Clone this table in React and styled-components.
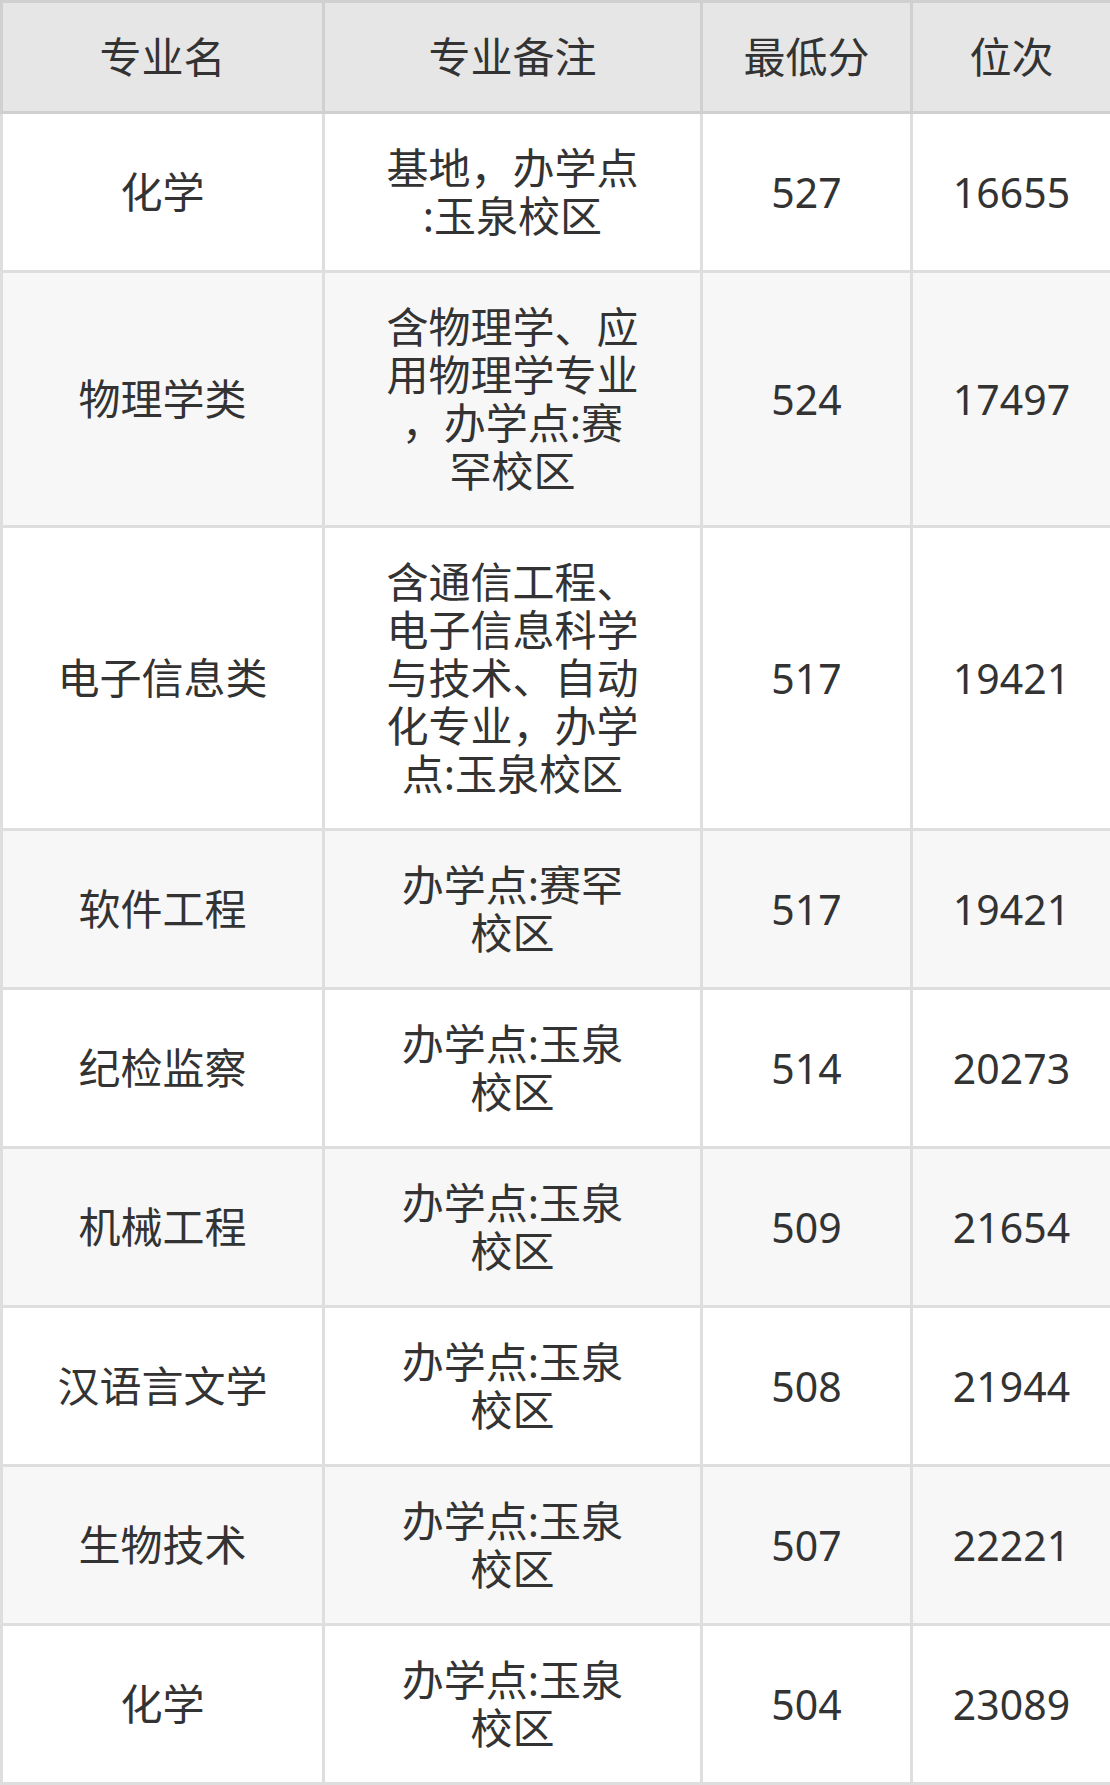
import React from "react";
import styled, { createGlobalStyle } from "styled-components";

const Global = createGlobalStyle`
  html, body { margin: 0; padding: 0; background: #fff; }
  body { font-family: "Noto Sans", "Noto Sans CJK SC", sans-serif; }
`;

const Table = styled.table`
  width: 1110px;
  border-collapse: collapse;
  table-layout: fixed;
  color: #333;
  font-size: 42px;
  line-height: 48px;
`;

const HeadCell = styled.th`
  background: #e6e6e6;
  border: 3px solid #d0d0d0;
  padding: 30px 0;
  font-weight: 400;
  text-align: center;
`;

const Row = styled.tr`
  background: ${(p) => (p.$alt ? "#f7f7f7" : "#ffffff")};
`;

const Cell = styled.td`
  border: 3px solid #dedede;
  padding: 30px 0;
  text-align: center;
  vertical-align: middle;
`;

const NumCell = styled(Cell)`
  font-size: 41px;
`;

const Line = styled.span`
  display: block;
  white-space: nowrap;
`;

const rows = [
  ["化学", ["基地，办学点", ":玉泉校区"], "527", "16655"],
  ["物理学类", ["含物理学、应", "用物理学专业", "，办学点:赛", "罕校区"], "524", "17497"],
  ["电子信息类", ["含通信工程、", "电子信息科学", "与技术、自动", "化专业，办学", "点:玉泉校区"], "517", "19421"],
  ["软件工程", ["办学点:赛罕", "校区"], "517", "19421"],
  ["纪检监察", ["办学点:玉泉", "校区"], "514", "20273"],
  ["机械工程", ["办学点:玉泉", "校区"], "509", "21654"],
  ["汉语言文学", ["办学点:玉泉", "校区"], "508", "21944"],
  ["生物技术", ["办学点:玉泉", "校区"], "507", "22221"],
  ["化学", ["办学点:玉泉", "校区"], "504", "23089"],
];

export default function App() {
  return (
    <>
      <Global />
      <Table>
        <colgroup>
          <col style={{ width: 322 }} />
          <col style={{ width: 378 }} />
          <col style={{ width: 210 }} />
          <col style={{ width: 200 }} />
        </colgroup>
        <thead>
          <tr>
            <HeadCell>专业名</HeadCell>
            <HeadCell>专业备注</HeadCell>
            <HeadCell>最低分</HeadCell>
            <HeadCell>位次</HeadCell>
          </tr>
        </thead>
        <tbody>
          {rows.map((r, i) => (
            <Row key={i} $alt={i % 2 === 1}>
              <Cell>{r[0]}</Cell>
              <Cell>
                {r[1].map((l, j) => (
                  <Line key={j}>{l}</Line>
                ))}
              </Cell>
              <NumCell>{r[2]}</NumCell>
              <NumCell>{r[3]}</NumCell>
            </Row>
          ))}
        </tbody>
      </Table>
    </>
  );
}
